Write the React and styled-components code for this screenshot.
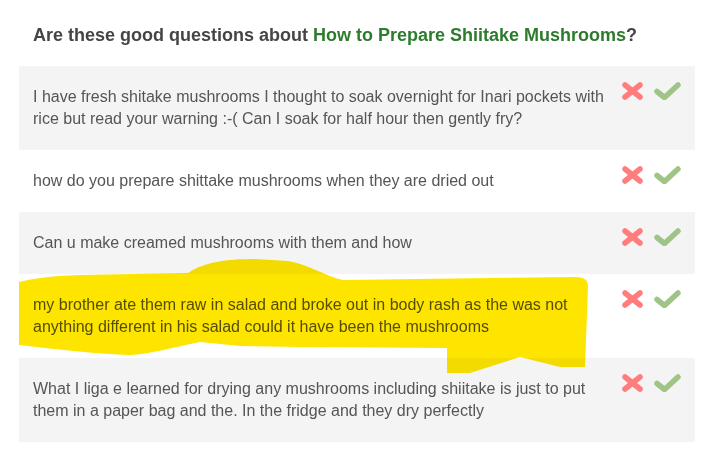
import styled, { createGlobalStyle } from "styled-components";

const GlobalStyle = createGlobalStyle`
  body {
    margin: 0;
    background: #fff;
    font-family: "Liberation Sans", Arial, sans-serif;
  }
`;

const Page = styled.div`
  position: relative;
  width: 703px;
  height: 458px;
  padding: 24px 0 0 19px;
  box-sizing: border-box;
`;

const Titulo = styled.h2`
  margin: 0 0 20px;
  padding-left: 14px;
  font-size: 18px;
  line-height: 22px;
  font-weight: bold;
  color: #454545;

  span {
    color: #2e7b2e;
  }
`;

const Lista = styled.ul`
  list-style: none;
  margin: 0;
  padding: 0;
  width: 676px;
`;

const Linha = styled.li`
  display: flex;
  align-items: flex-start;
  padding: 20px 14px;
  background: ${(p) => (p.$cinza ? "#f4f4f4" : "#fff")};
`;

const Texto = styled.p`
  flex: 1;
  margin: 0;
  padding-right: 12px;
  font-size: 16px;
  line-height: 22px;
  color: #555;
`;

const Icones = styled.div`
  display: flex;
  align-items: center;
  gap: 11px;
  margin-top: -4px;
  height: 18px;
`;

const BotaoIcone = styled.button`
  display: block;
  border: 0;
  padding: 0;
  background: none;
  cursor: pointer;
  line-height: 0;
`;

const Marca = styled.svg`
  position: absolute;
  left: 0;
  top: 0;
  pointer-events: none;
  mix-blend-mode: multiply;
`;

function IconeX() {
  return (
    <svg width="21" height="18" viewBox="0 0 21 18">
      <g stroke="#ff7d7d" strokeWidth="5.5" strokeLinecap="round">
        <line x1="3" y1="3" x2="18" y2="15" />
        <line x1="18" y1="3" x2="3" y2="15" />
      </g>
    </svg>
  );
}

function IconeCheck() {
  return (
    <svg width="27" height="18" viewBox="0 0 27 18">
      <polyline
        points="3,9.5 10.5,15.5 24,3"
        fill="none"
        stroke="#a0c488"
        strokeWidth="5.5"
        strokeLinecap="round"
        strokeLinejoin="round"
      />
    </svg>
  );
}

const perguntas = [
  "I have fresh shitake mushrooms I thought to soak overnight for Inari pockets with rice but read your warning :-( Can I soak for half hour then gently fry?",
  "how do you prepare shittake mushrooms when they are dried out",
  "Can u make creamed mushrooms with them and how",
  "my brother ate them raw in salad and broke out in body rash as the was not anything different in his salad could it have been the mushrooms",
  "What I liga e learned for drying any mushrooms including shiitake is just to put them in a paper bag and the. In the fridge and they dry perfectly",
];

export default function App() {
  return (
    <>
      <GlobalStyle />
      <Page>
        <Titulo>
          Are these good questions about <span>How to Prepare Shiitake Mushrooms</span>?
        </Titulo>
        <Lista>
          {perguntas.map((texto, i) => (
            <Linha key={i} $cinza={i % 2 === 0}>
              <Texto>{texto}</Texto>
              <Icones>
                <BotaoIcone aria-label="não">
                  <IconeX />
                </BotaoIcone>
                <BotaoIcone aria-label="sim">
                  <IconeCheck />
                </BotaoIcone>
              </Icones>
            </Linha>
          ))}
        </Lista>
        {/* marca-texto amarelo por cima da 4a pergunta */}
        <Marca width="703" height="458" viewBox="0 0 703 458">
          <path
            fill="#fee500"
            d="M19,282 C30,279 50,276 80,275 L188,273 C205,262 225,259 255,259 L288,261 C310,265 325,276 343,280 L575,277 C584,277 588,280 588,286 L585,367 L560,367 L520,357 L470,373 L447,373 L447,348 L300,347 L240,346 L200,342 C170,348 150,354 130,355 C100,354 60,350 19,345 Z"
          />
        </Marca>
      </Page>
    </>
  );
}
